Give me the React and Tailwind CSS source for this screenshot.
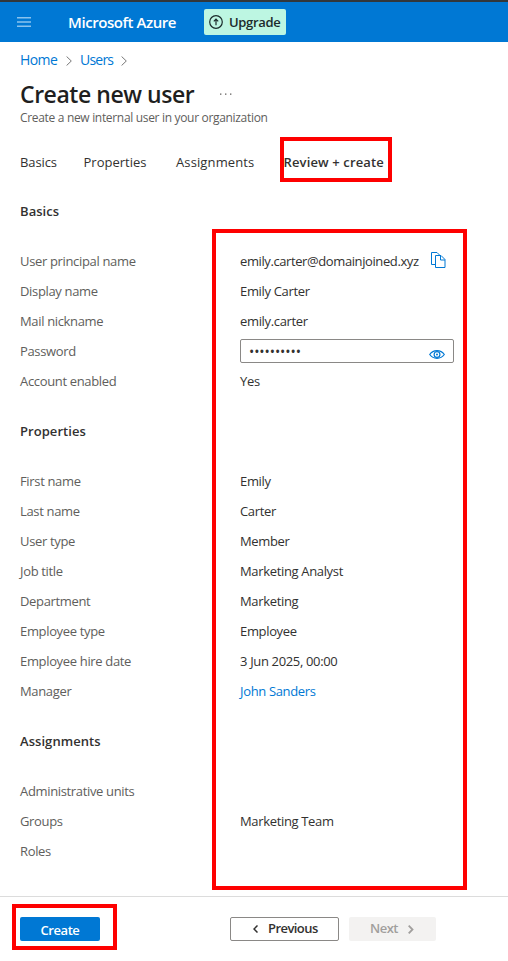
import React from 'react';

const sections = [
  {
    title: 'Basics',
    rows: [
      { label: 'User principal name', value: 'emily.carter@domainjoined.xyz', kind: 'copy' },
      { label: 'Display name', value: 'Emily Carter' },
      { label: 'Mail nickname', value: 'emily.carter' },
      { label: 'Password', value: '••••••••••', kind: 'password' },
      { label: 'Account enabled', value: 'Yes' },
    ],
  },
  {
    title: 'Properties',
    rows: [
      { label: 'First name', value: 'Emily' },
      { label: 'Last name', value: 'Carter' },
      { label: 'User type', value: 'Member' },
      { label: 'Job title', value: 'Marketing Analyst' },
      { label: 'Department', value: 'Marketing' },
      { label: 'Employee type', value: 'Employee' },
      { label: 'Employee hire date', value: '3 Jun 2025, 00:00' },
      { label: 'Manager', value: 'John Sanders', kind: 'link' },
    ],
  },
  {
    title: 'Assignments',
    rows: [
      { label: 'Administrative units', value: '' },
      { label: 'Groups', value: 'Marketing Team' },
      { label: 'Roles', value: '' },
    ],
  },
];

function CopyIcon() {
  return (
    <svg className="mb-[4px] h-4 w-[15px]" viewBox="0 0 15 16" fill="none" stroke="#0078d4">
      <path d="M4 12.500H.5V.5h5.500L8.500 3" />
      <path d="M4.500 3.500h5.500l4 4v8H4.500z" fill="#fff" />
      <path d="M9.500 3.500v4.500h4.500" />
    </svg>
  );
}

function EyeIcon() {
  return (
    <svg className="mt-[7px] h-[9px] w-4" viewBox="0 0 16 9" fill="none" stroke="#0078d4" strokeWidth="1.200">
      <path d="M.7 4.500C2.500 2 5 .7 8 .7s5.500 1.300 7.300 3.800C13.500 7 11 8.300 8 8.300S2.500 7 .7 4.500z" />
      <circle cx="8" cy="4.500" r="2.900" />
      <circle cx="8" cy="4.500" r="1" fill="#0078d4" stroke="none" />
    </svg>
  );
}

function Chevron({ className }) {
  return (
    <svg className={className} viewBox="0 0 6 10" fill="none" stroke="currentColor">
      <path d="M.6.5 5.300 5 .6 9.500" />
    </svg>
  );
}

function Value({ row }) {
  if (row.kind === 'password') {
    return (
      <div className="mb-[2px] flex h-6 w-[214px] items-center justify-between rounded-[2px] border border-[#8a8886] pr-2 pl-[8px]">
        <span className="pt-px text-[14px] leading-[18px] tracking-[-0.080px] text-[#323130]">{row.value}</span>
        <EyeIcon />
      </div>
    );
  }
  if (row.kind === 'copy') {
    return (
      <div className="flex items-center">
        <span className="w-[191px] tracking-[-0.400px]">{row.value}</span>
        <CopyIcon />
      </div>
    );
  }
  if (row.kind === 'link') return <a className="text-[#0078d4]">{row.value}</a>;
  return <span>{row.value}</span>;
}

export default function App() {
  return (
    <div className="relative flex h-[961px] w-[508px] flex-col overflow-hidden bg-white font-['Open_Sans','Noto_Sans',sans-serif] text-[13px] tracking-[-0.340px] whitespace-nowrap text-[#323130]">
      <header className="flex h-[42px] shrink-0 items-center border-t-2 border-[#32373b] bg-[#0078d4] pl-[17px] text-white">
        <svg className="h-[10px] w-[14px]" viewBox="0 0 14 10" fill="#8ac3ee">
          <path d="M0 0h14v1.500H0zM0 4.200h14v1.600H0zM0 8.500h14V10H0z" />
        </svg>
        <span className="ml-[37px] w-[136px] text-[15px] font-semibold tracking-[-0.430px]">Microsoft Azure</span>
        <button className="flex h-[26px] w-[82px] items-center rounded-[2px] bg-[#bdf6e2] pl-[5px] text-[13px] font-semibold text-[#1b2b2b]">
          <svg className="mr-[6px] size-[14px]" viewBox="0 0 14 14" fill="none" stroke="currentColor" strokeWidth="1.200">
            <circle cx="7" cy="7" r="6.300" />
            <path d="M7 10.200V4.500M4.800 6.300 7 4.100l2.200 2.200" />
          </svg>
          <span className="pt-px">Upgrade</span>
        </button>
      </header>

      <nav className="mt-[7px] flex h-5 items-center pl-5 text-[14px] text-[#0078d4]">
        <a className="w-[46px] tracking-[-0.600px]">Home</a>
        <Chevron className="h-[10px] w-[6px] translate-y-[2px] text-[#767676]" />
        <a className="ml-2 w-[41px] tracking-[-0.780px]">Users</a>
        <Chevron className="h-[10px] w-[6px] translate-y-[2px] text-[#767676]" />
      </nav>

      <div className="mt-[9px] flex h-8 items-center pl-5">
        <h1 className="w-[200px] text-[23px] font-semibold tracking-[-0.450px] text-[#1f1f1f]">Create new user</h1>
        <svg className="-mt-px h-[2px] w-[12px]" viewBox="0 0 12 2" fill="#605e5c">
          <path d="M0 .4h1.400v1.300H0zM5 .4h1.400v1.300H5zM10 .4h1.400v1.300H10z" />
        </svg>
      </div>
      <p className="mt-px h-4 pl-5 text-[12px] leading-[14px] tracking-[-0.320px] text-[#605e5c]">Create a new internal user in your organization</p>

      <div className="mt-[23px] flex h-[26px] items-center pl-5">
        <span className="w-[63.500px] tracking-[-0.100px]">Basics</span>
        <span className="w-[92.500px] tracking-[0px]">Properties</span>
        <span className="w-[107.500px] tracking-[0.120px]">Assignments</span>
        <span className="font-semibold tracking-[0.130px]">Review + create</span>
      </div>

      <main className="mt-[21px] flex flex-col gap-5 pl-5">
        {sections.map((section) => (
          <section key={section.title}>
            <h2 className="mb-5 h-[30px] leading-[28px] font-semibold tracking-[0.060px]">{section.title}</h2>
            {section.rows.map((row) => (
              <div key={row.label} className="grid h-[30px] grid-cols-[220px_1fr] items-center">
                <span className="text-[#605e5c]">{row.label}</span>
                <Value row={row} />
              </div>
            ))}
          </section>
        ))}
      </main>

      <footer className="mt-auto flex h-[65px] items-start border-t border-[#dcdcdc] pt-5 pl-5 font-semibold">
        <button className="h-6 w-20 rounded-[2px] bg-[#0078d4] pt-[4px] tracking-[-0.450px] text-white">Create</button>
        <button className="ml-[130px] flex h-6 w-[109px] items-center rounded-[2px] border border-[#8a8886] pl-[22px] tracking-[-0.560px]">
          <svg className="mr-[10px] h-2 w-[5px]" viewBox="0 0 5 8" fill="none" stroke="currentColor" strokeWidth="1.500">
            <path d="M4.500.5 1 4l3.500 3.500" />
          </svg>
          Previous
        </button>
        <button className="ml-[10px] flex h-6 w-[87px] items-center rounded-[2px] bg-[#f3f2f1] pl-[21px] tracking-[-0.500px] text-[#a19f9d]">
          Next
          <svg className="ml-[10px] h-[9px] w-[6px]" viewBox="0 0 6 9" fill="none" stroke="currentColor" strokeWidth="1.800">
            <path d="M.7.7 4.500 4.500.7 8.300" />
          </svg>
        </button>
      </footer>

      <div className="pointer-events-none absolute top-[137px] left-[280px] h-[45px] w-[112px] border-4 border-[#fe0000]" />
      <div className="pointer-events-none absolute top-[229px] left-[212px] h-[661px] w-[255px] border-4 border-[#fe0000]" />
      <div className="pointer-events-none absolute top-[904px] left-[12px] h-[46px] w-[105px] border-4 border-[#fe0000]" />
    </div>
  );
}
